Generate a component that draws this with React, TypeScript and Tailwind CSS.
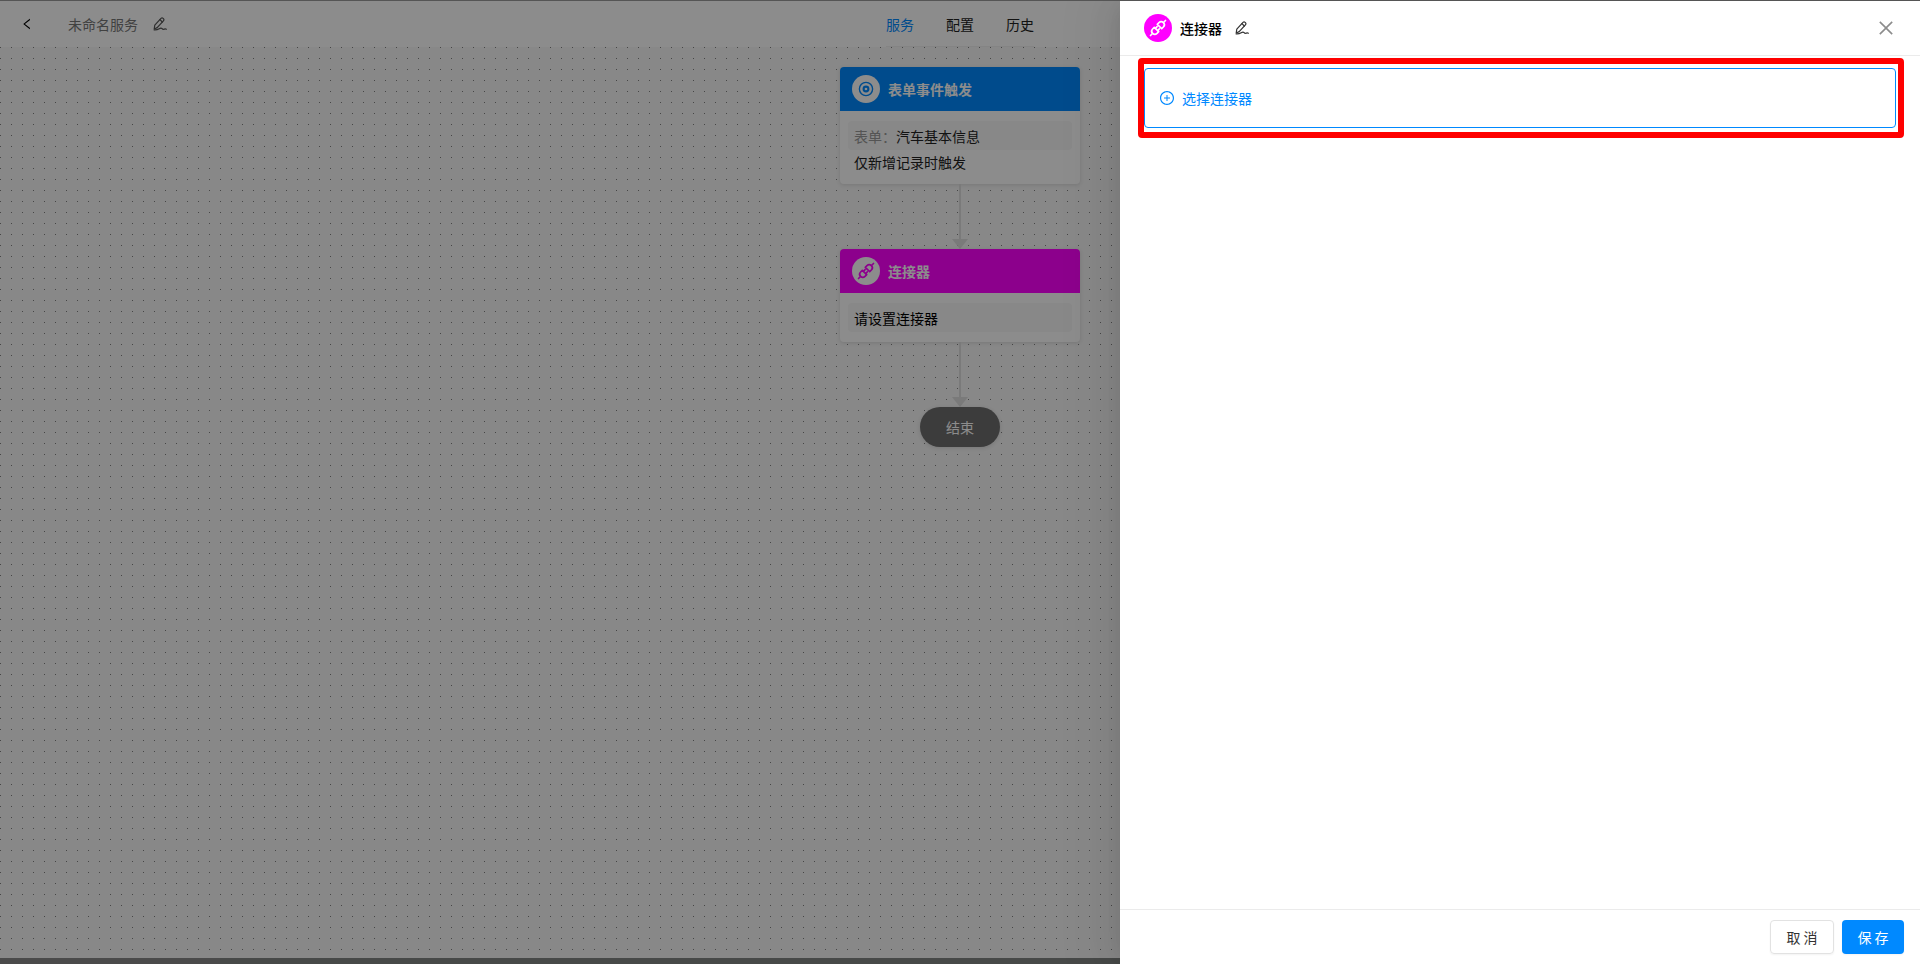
import type { ReactNode } from 'react';
import { clsx } from 'clsx';
import { AiOutlineClose, AiOutlineLeft, AiOutlinePlusCircle } from 'react-icons/ai';

const TABS = ['服务', '配置', '历史'];

function EditIcon() {
  return (
    <svg
      width="14"
      height="14"
      viewBox="0 0 14 14"
      fill="none"
      stroke="currentColor"
      strokeWidth="1.2"
      strokeLinejoin="round"
      strokeLinecap="round"
    >
      <path d="M1.8 8.2 8 1.4a1.5 1.5 0 0 1 2.100 0l.3.3a1.500 1.500 0 0 1 0 2.100L4.200 10.600l-3 1.400z" />
      <path d="M7 2.700 9.300 5" />
      <path d="M1.200 12.900c2.200.2 3.600-.3 5-1.200 1.400-.9 2.200-.9 2.900 0 .7.9 1.500.9 2.400.4.8-.4 1.200-.3 1.900.1" />
    </svg>
  );
}

function TargetIcon() {
  return (
    <svg width="16" height="16" viewBox="0 0 16 16" fill="none" stroke="currentColor">
      <circle cx="8" cy="8" r="6.6" strokeWidth="1.4" />
      <circle cx="8" cy="8" r="2.4" strokeWidth="2.1" />
    </svg>
  );
}

function PlugIcon() {
  return (
    <svg width="20" height="20" viewBox="-10 -10 20 20" fill="none" stroke="currentColor" strokeWidth="1.7">
      <g transform="rotate(-45)" strokeLinejoin="round" strokeLinecap="round">
        <path d="M2.1-3.1V3.1H4.500A3.100 3.100 0 0 0 4.500-3.100Z" />
        <path d="M-2.100-3.100V3.100H-4.500A3.100 3.100 0 0 1-4.500-3.100Z" />
        <path d="M-2.100-1.600H.3M-2.100 1.600H.3" />
        <path d="M7.800 0H10.600M-7.800 0H-10.600" />
      </g>
    </svg>
  );
}

function FlowNode({
  title,
  icon,
  color,
  children,
}: {
  title: string;
  icon: ReactNode;
  color: 'blue' | 'magenta';
  children: ReactNode;
}) {
  return (
    <section className="w-60 overflow-hidden rounded bg-white text-sm shadow-[0_1px_4px_rgba(0,0,0,0.12)]">
      <header
        className={clsx(
          'flex h-11 items-center gap-2 px-3 font-bold text-white',
          color === 'blue' ? 'bg-[#0089ff]' : 'bg-[#ff00ff]',
        )}
      >
        <span
          className={clsx(
            'flex size-7 items-center justify-center rounded-full bg-white',
            color === 'blue' ? 'text-[#0089ff]' : 'text-[#ff00ff]',
          )}
        >
          {icon}
        </span>
        <h2>{title}</h2>
      </header>
      <div className="px-2 py-[10px] text-[#222]">{children}</div>
    </section>
  );
}

function Arrow() {
  return (
    <div className="flex flex-col items-center">
      <div className="h-[55px] w-[2px] bg-[#dedede]" />
      <svg width="16" height="10" viewBox="0 0 16 10" className="fill-[#dedede]">
        <path d="M0 0h16L8 10z" />
      </svg>
    </div>
  );
}

function ConnectorDrawer() {
  return (
    <aside className="flex w-[800px] max-w-full flex-col bg-white text-sm shadow-[-6px_0_16px_-8px_rgba(0,0,0,0.08),-9px_0_28px_rgba(0,0,0,0.05),-12px_0_48px_16px_rgba(0,0,0,0.03)]">
      <header className="flex h-[55px] items-center border-b border-[#ebebeb] px-6">
        <span className="flex size-7 items-center justify-center rounded-full bg-[#ff00ff] text-white">
          <PlugIcon />
        </span>
        <h2 className="ml-2 font-medium text-black">连接器</h2>
        <button type="button" aria-label="重命名" className="ml-[13px] text-[#333]">
          <EditIcon />
        </button>
        <button type="button" aria-label="关闭" className="ml-auto text-[#8c8c8c]">
          <AiOutlineClose size={20} />
        </button>
      </header>

      <div className="flex-1 px-6 pt-3">
        <div className="relative">
          <button
            type="button"
            className="flex h-[60px] w-full items-center gap-[7px] rounded border border-[#0089ff] px-[14px] text-[#0089ff]"
          >
            <AiOutlinePlusCircle size={16} />
            选择连接器
          </button>
          <div className="pointer-events-none absolute -top-[10px] -right-2 -bottom-[10px] -left-[6px] rounded border-[6px] border-[#ff0000]" />
        </div>
      </div>

      <footer className="flex justify-end gap-2 border-t border-[#ebebeb] px-4 py-[10px]">
        <button type="button" className="h-[34px] w-16 rounded border border-[#e2e2e2] text-[#333] shadow-xs">
          取 消
        </button>
        <button type="button" className="h-[34px] w-[62px] rounded bg-[#0089ff] text-white shadow-xs">
          保 存
        </button>
      </footer>
    </aside>
  );
}

export default function App() {
  return (
    <div className="relative flex h-screen flex-col border-t border-[#555] bg-white font-['Noto_Sans_CJK_SC',sans-serif] text-sm">
      <header className="grid h-[46px] grid-cols-3 items-center bg-white">
        <div className="flex items-center pl-5">
          <button type="button" aria-label="返回" className="text-black">
            <AiOutlineLeft size={14} />
          </button>
          <h1 className="ml-[34px] text-[#777]">未命名服务</h1>
          <button type="button" aria-label="重命名" className="ml-[15px] text-[#555]">
            <EditIcon />
          </button>
        </div>
        <nav className="flex h-full items-center gap-8 justify-self-center border-b border-[#f0f0f0]">
          {TABS.map((tab, i) => (
            <a key={tab} href="#" className={i === 0 ? 'text-[#0089ff]' : 'text-[#222]'}>
              {tab}
            </a>
          ))}
        </nav>
      </header>

      <main className="flex flex-1 flex-col items-center bg-[#f7f7f7] bg-[conic-gradient(at_1px_1px,transparent_75%,#808080_0)] bg-size-[11px_11px] pt-5">
        <FlowNode title="表单事件触发" color="blue" icon={<TargetIcon />}>
          <p className="flex h-[29px] items-center rounded bg-[#f7f7f7] px-[6px]">
            <span className="text-[#999]">表单：</span>汽车基本信息
          </p>
          <p className="flex h-6 items-center px-[6px]">仅新增记录时触发</p>
        </FlowNode>
        <Arrow />
        <FlowNode title="连接器" color="magenta" icon={<PlugIcon />}>
          <p className="flex h-[29px] items-center rounded bg-[#f7f7f7] px-[6px] text-black">请设置连接器</p>
        </FlowNode>
        <Arrow />
        <div className="flex h-10 w-20 items-center justify-center rounded-full bg-[#6e6e6e] text-white shadow-[0_1px_4px_rgba(0,0,0,0.12)]">
          结束
        </div>
      </main>
      <div className="h-[6px] bg-[#888] pl-[220px]">
        <div className="h-full bg-[#818683]" />
      </div>

      {/* Mask + drawer */}
      <div className="absolute inset-0 flex justify-end overflow-hidden bg-black/45">
        <ConnectorDrawer />
      </div>
    </div>
  );
}
